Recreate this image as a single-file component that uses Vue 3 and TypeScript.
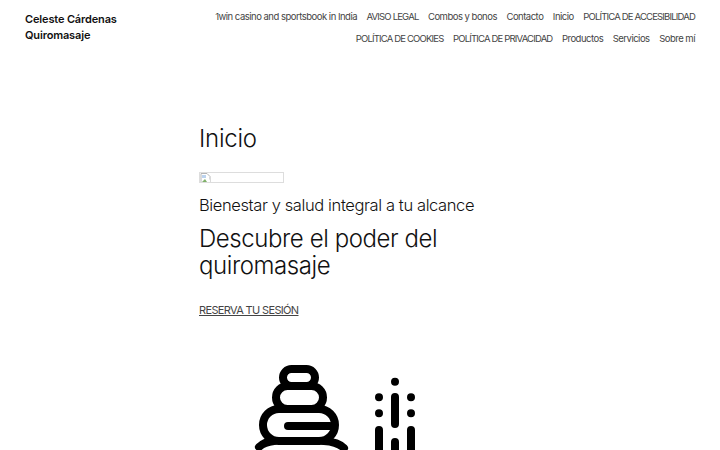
<template>
  <div class="page">
    <header class="site-header">
      <a class="site-title">Celeste Cárdenas Quiromasaje</a>
      <nav class="site-nav">
        <a v-for="item in navItems" :key="item.label" :class="{ caps: item.caps }">{{ item.label }}</a>
      </nav>
    </header>

    <main class="content">
      <h1 class="page-title">Inicio</h1>
      <div class="broken-image">
        <svg width="11" height="11" viewBox="0 0 11 11">
          <path d="M1 .5h6l3 3v7H1z" fill="#fff" stroke="#b5b5b5" />
          <path d="M2 2h4v3H2z" fill="#bcd3ee" />
          <path d="M2 9l3-3 2 3z" fill="#7fb069" />
          <path d="M6 11l4-5v5z" fill="#fff" />
        </svg>
      </div>
      <p class="tagline">Bienestar y salud integral a tu alcance</p>
      <h2 class="headline">Descubre el poder del quiromasaje</h2>
      <a class="cta">RESERVA TU SESIÓN</a>

      <div class="icons">
        <svg class="stones" width="100" height="90" viewBox="0 0 100 90" fill="none" stroke="#000" stroke-width="8" stroke-linecap="round">
          <rect x="33" y="9" width="32" height="17" rx="8.5" />
          <rect x="26" y="26" width="47" height="23" rx="11.5" />
          <rect x="13" y="49" width="72" height="32" rx="16" />
          <path d="M38 66h42" />
          <path d="M9 87q5-5 15-6M74 81q14 1 20 7" />
        </svg>
        <svg class="drops" width="50" height="80" viewBox="0 0 50 80" fill="none" stroke="#000" stroke-width="8" stroke-linecap="round">
          <path d="M25 11.7v0M9 27.3v0M41 27.3v0M9 43.3v0M41 43.3v0" />
          <path d="M25 27v27M9 60v30M41 60v30M25 72v20" />
        </svg>
      </div>
    </main>
  </div>
</template>

<script setup lang="ts">
interface NavItem {
  label: string
  caps?: boolean
}

const navItems: NavItem[] = [
  { label: '1win casino and sportsbook in India' },
  { label: 'AVISO LEGAL', caps: true },
  { label: 'Combos y bonos' },
  { label: 'Contacto' },
  { label: 'Inicio' },
  { label: 'POLÍTICA DE ACCESIBILIDAD', caps: true },
  { label: 'POLÍTICA DE COOKIES', caps: true },
  { label: 'POLÍTICA DE PRIVACIDAD', caps: true },
  { label: 'Productos' },
  { label: 'Servicios' },
  { label: 'Sobre mí' },
]
</script>

<style>
html,
body {
  margin: 0;
  background: #fff;
}
</style>

<style scoped>
.page {
  height: 450px;
  overflow: hidden;
  font-family: Inter, 'Liberation Sans', sans-serif;
  color: #000;
}

.site-header {
  display: flex;
  justify-content: space-between;
  padding: 6px 25px 0;
}

.site-title {
  width: 110px;
  padding-top: 5px;
  font-size: 11px;
  font-weight: 600;
  line-height: 16px;
  letter-spacing: -0.15px;
  color: #111;
}

.site-nav {
  display: flex;
  flex-wrap: wrap;
  justify-content: flex-end;
  width: 490px;
  column-gap: 9.5px;
  row-gap: 8px;
  font-size: 9.5px;
  line-height: 14px;
  letter-spacing: -0.5px;
  color: #444;
  padding-top: 4px;
}

.site-nav .caps {
  letter-spacing: -0.82px;
}

.content {
  width: 322px;
  margin: 0 auto;
  padding-top: 76px;
}

.page-title {
  margin: 0;
  font-size: 24px;
  font-weight: 300;
  line-height: 34px;
  letter-spacing: -0.25px;
  color: #111;
}

.broken-image {
  display: flex;
  width: 83px;
  height: 9px;
  margin-top: 16px;
  border: 1px solid #ddd;
  overflow: hidden;
}

.tagline {
  margin: 11px 0 0;
  font-size: 16.5px;
  font-weight: 300;
  line-height: 23px;
  letter-spacing: -0.39px;
  color: #111;
}

.headline {
  margin: 8px 0 0;
  font-size: 24px;
  font-weight: 300;
  line-height: 27px;
  letter-spacing: -0.42px;
  color: #111;
}

.cta {
  display: block;
  margin-top: 23px;
  font-size: 11px;
  line-height: 16px;
  letter-spacing: -0.65px;
  color: #444;
  text-decoration: underline;
}

.icons {
  display: flex;
  align-items: flex-start;
  margin-top: 42px;
  padding-left: 51px;
  gap: 20px;
}

.stones,
.drops {
  flex: none;
}

.drops {
  margin-top: 10px;
}
</style>
